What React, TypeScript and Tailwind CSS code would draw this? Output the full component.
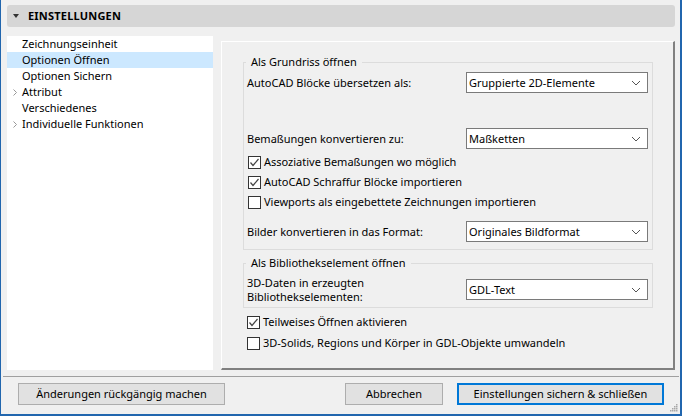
import type { ReactNode } from "react";

const font = { fontFamily: '"Noto Sans", "Liberation Sans", sans-serif' };

type TreeItem = { label: string; expandable?: boolean; selected?: boolean };

const treeItems: TreeItem[] = [
  { label: "Zeichnungseinheit" },
  { label: "Optionen Öffnen", selected: true },
  { label: "Optionen Sichern" },
  { label: "Attribut", expandable: true },
  { label: "Verschiedenes" },
  { label: "Individuelle Funktionen", expandable: true },
];

function Chevron() {
  return (
    <svg width="10" height="6" viewBox="0 0 10 6" className="shrink-0">
      <path d="M1 1 L5 5 L9 1" fill="none" stroke="#555" strokeWidth="1" />
    </svg>
  );
}

function Select({ value }: { value: string }) {
  return (
    <div className="w-[182px] h-[21px] bg-white border border-[#7a7a7a] flex items-center justify-between pl-[2px] pr-[6px] shrink-0">
      <span>{value}</span>
      <Chevron />
    </div>
  );
}

function Checkbox({ checked, label, className = "" }: { checked?: boolean; label: string; className?: string }) {
  return (
    <div className={`h-[20px] flex items-center gap-[3px] ${className}`}>
      <div className="w-[13px] h-[13px] bg-white border border-[#333] flex items-center justify-center shrink-0">
        {checked && (
          <svg width="11" height="11" viewBox="0 0 11 11">
            <path d="M1.5 5.5 L4 8.5 L9.5 2" fill="none" stroke="#444" strokeWidth="1.2" />
          </svg>
        )}
      </div>
      <span>{label}</span>
    </div>
  );
}

function Group({ title, className, children }: { title: string; className: string; children: ReactNode }) {
  return (
    <div className={`relative w-[410px] border border-[#dcdcdc] pl-[3px] pr-[4px] ${className}`}>
      <span className="absolute -top-[9px] left-[2px] px-[5px] bg-[#f0f0f0] leading-[16px]">{title}</span>
      {children}
    </div>
  );
}

function Button({ label, primary, w }: { label: string; primary?: boolean; w: string }) {
  return (
    <button
      type="button"
      className={`${w} h-[22px] bg-[#e1e1e1] flex items-center justify-center ${
        primary ? "border-2 border-[#0078d7]" : "border border-[#adadad]"
      }`}
    >
      {label}
    </button>
  );
}

export default function App() {
  return (
    <div
      style={font}
      className="relative w-[682px] h-[416px] bg-[#f0f0f0] border-l border-r-2 border-b-2 border-[#2166ae] text-[11px] text-black leading-[16px] flex flex-col"
    >
      <div className="ml-[6px] mt-[5px] w-[668px] h-[22px] rounded-[3px] bg-[#d6d6d6] flex items-center pl-[6px] gap-[9px]">
        <svg width="6" height="4" viewBox="0 0 6 4">
          <path d="M0 0 L6 0 L3 4 Z" fill="#333" />
        </svg>
        <span className="font-bold tracking-[0.2px]">EINSTELLUNGEN</span>
      </div>

      <div className="flex ml-[6px] mt-[9px]">
        <div className="w-[206px] h-[334px] bg-white">
          {treeItems.map((it) => (
            <div
              key={it.label}
              className={`h-[16px] flex items-center ${it.selected ? "bg-[#cce8ff]" : ""}`}
            >
              <span className="w-[15px] flex pl-[6px]">
                {it.expandable && (
                  <svg width="4" height="7" viewBox="0 0 4 7">
                    <path d="M0.5 0.5 L3.5 3.5 L0.5 6.5" fill="none" stroke="#999" strokeWidth="1" />
                  </svg>
                )}
              </span>
              <span>{it.label}</span>
            </div>
          ))}
        </div>

        <div className="ml-[8px] mt-[5px] w-[454px] h-[329px] border-t border-l border-white border-r-2 border-b-2 border-r-[#808080] border-b-[#808080] pl-[21px] pt-[20px] flex flex-col">
          <Group title="Als Grundriss öffnen" className="pt-[9px] pb-[7px]">
            <div className="h-[21px] flex items-center justify-between">
              <span>AutoCAD Blöcke übersetzen als:</span>
              <Select value="Gruppierte 2D-Elemente" />
            </div>
            <div className="h-[21px] mt-[35px] flex items-center justify-between">
              <span>Bemaßungen konvertieren zu:</span>
              <Select value="Maßketten" />
            </div>
            <div className="mt-[3px] pl-[1px]">
              <Checkbox checked label="Assoziative Bemaßungen wo möglich" />
              <Checkbox checked label="AutoCAD Schraffur Blöcke importieren" />
              <Checkbox label="Viewports als eingebettete Zeichnungen importieren" />
            </div>
            <div className="h-[21px] mt-[9px] flex items-center justify-between">
              <span>Bilder konvertieren in das Format:</span>
              <Select value="Originales Bildformat" />
            </div>
          </Group>

          <Group title="Als Bibliothekselement öffnen" className="mt-[13px] pt-[12px] pb-[3px]">
            <div className="flex items-start justify-between">
              <span className="leading-[14px]">
                3D-Daten in erzeugten
                <br />
                Bibliothekselementen:
              </span>
              <div className="mt-[3px]">
                <Select value="GDL-Text" />
              </div>
            </div>
          </Group>

          <div className="mt-[4px] pl-[4px]">
            <Checkbox checked label="Teilweises Öffnen aktivieren" />
            <Checkbox label="3D-Solids, Regions und Körper in GDL-Objekte umwandeln" className="mt-[1px]" />
          </div>
        </div>
      </div>

      <div className="ml-[2px] mt-[6px] w-[676px] border-t border-[#a0a0a0]" />

      <div className="flex mt-[6px] ml-[17px]">
        <Button label="Änderungen rückgängig machen" w="w-[207px]" />
        <div className="ml-[120px]">
          <Button label="Abbrechen" w="w-[98px]" />
        </div>
        <div className="ml-[14px]">
          <Button label="Einstellungen sichern & schließen" primary w="w-[207px]" />
        </div>
      </div>

      <svg width="8" height="8" viewBox="0 0 8 8" className="absolute right-[2px] bottom-[2px]">
        {[
          [6, 0],
          [4, 2],
          [6, 2],
          [2, 4],
          [4, 4],
          [6, 4],
          [0, 6],
          [2, 6],
          [4, 6],
          [6, 6],
        ].map(([x, y]) => (
          <rect key={`${x}-${y}`} x={x} y={y} width="1.5" height="1.5" fill="#a8a8a8" />
        ))}
      </svg>
    </div>
  );
}
